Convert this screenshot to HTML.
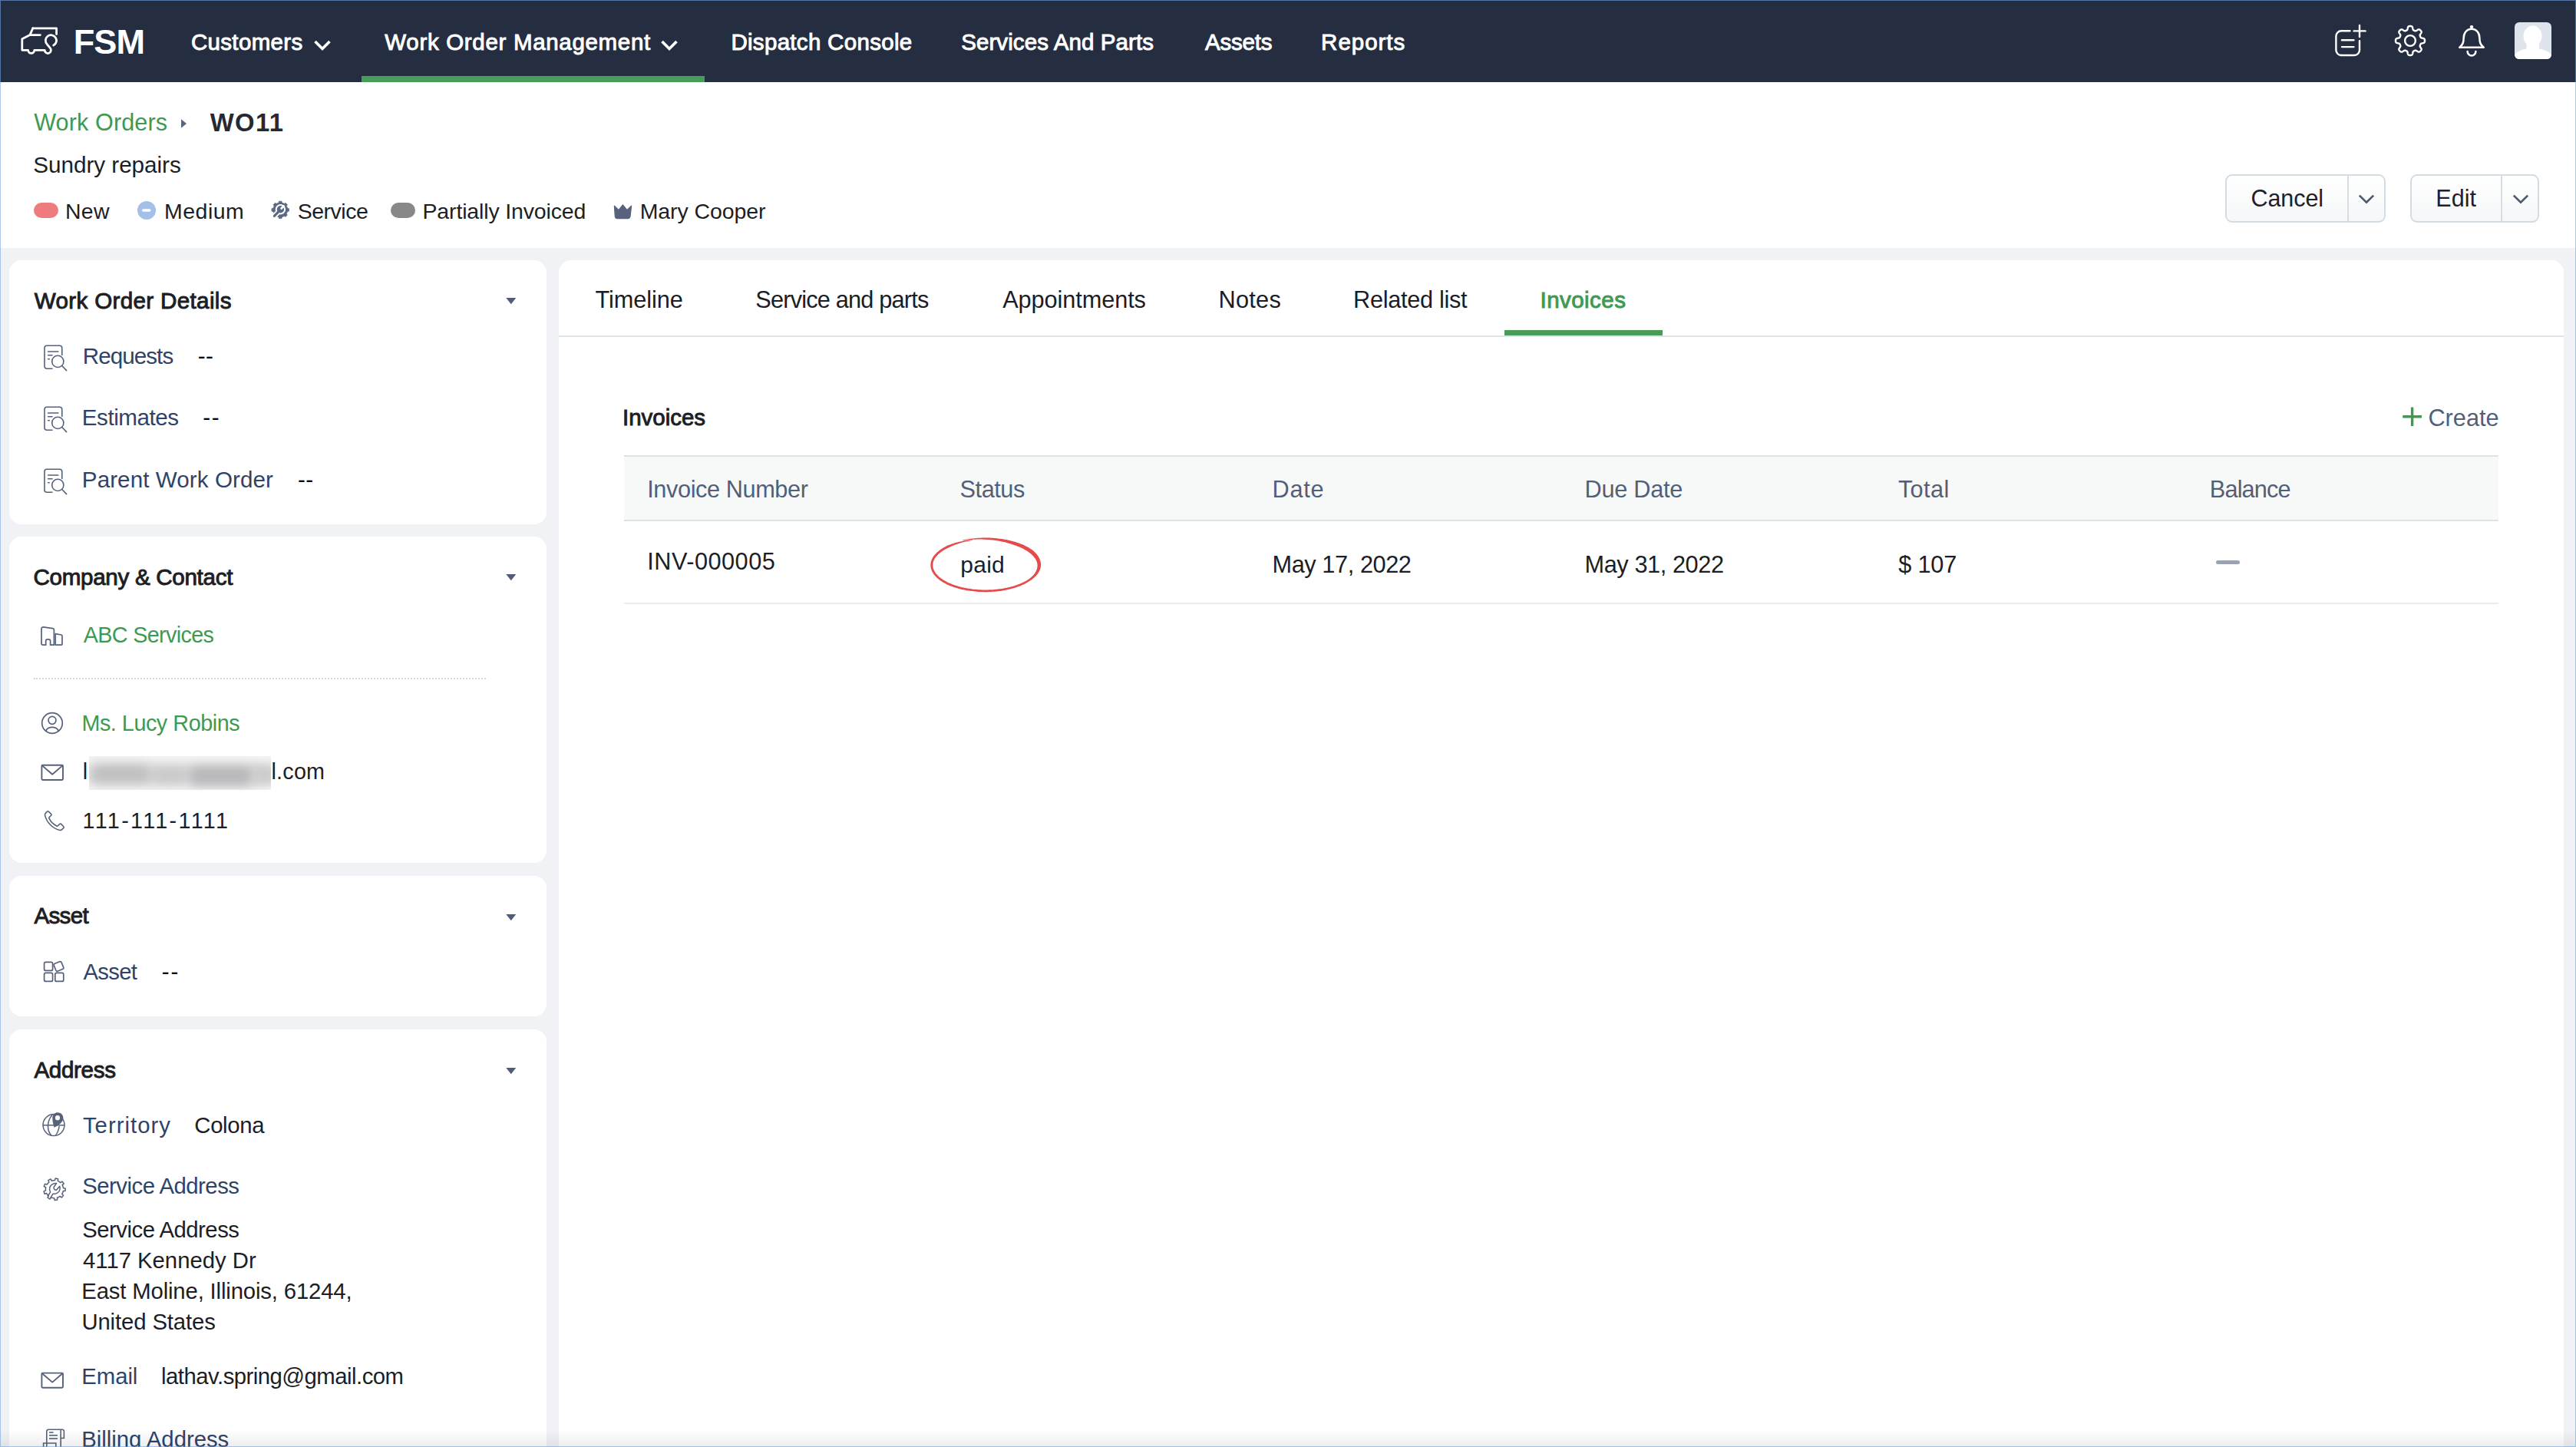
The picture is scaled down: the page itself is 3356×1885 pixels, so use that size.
<!DOCTYPE html>
<html><head><meta charset="utf-8"><title>WO11 - FSM</title>
<style>
html,body{margin:0;padding:0;}
body{width:3356px;height:1885px;overflow:hidden;position:relative;background:#f0f2f6;font-family:"Liberation Sans",sans-serif;}
.b{position:absolute;display:block;}
.t{position:absolute;white-space:pre;font-family:"Liberation Sans",sans-serif;}
.card{background:#fff;border-radius:16px;}
.btn{box-sizing:border-box;border:2px solid #d3dce2;border-radius:9px;background:linear-gradient(#ffffff,#f5f7f8);}
</style></head><body>
<div class="b" style="left:0;top:0;width:3356px;height:107px;background:#252d41"></div>
<div class="b" style="left:0;top:107px;width:3356px;height:216px;background:#fff"></div>
<div class="b" style="left:471px;top:99px;width:447px;height:8px;background:#479c57"></div>
<div class="b card" style="left:12px;top:339px;width:700px;height:344px"></div>
<div class="b card" style="left:12px;top:699px;width:700px;height:425px"></div>
<div class="b card" style="left:12px;top:1141px;width:700px;height:183px"></div>
<div class="b card" style="left:12px;top:1341px;width:700px;height:619px"></div>
<div class="b card" style="left:728px;top:339px;width:2612px;height:1620px"></div>
<div class="b" style="left:728px;top:437px;width:2612px;height:2px;background:#dde4e8"></div>
<div class="b" style="left:1960px;top:430px;width:206px;height:7px;background:#479c57"></div>
<div class="b" style="left:813px;top:593px;width:2442px;height:86px;background:#f7f9f9;border-top:2px solid #dde3e7;border-bottom:2px solid #dde3e7;box-sizing:border-box"></div>
<div class="b" style="left:813px;top:785px;width:2442px;height:2px;background:#e9edf0"></div>
<div class="b" style="left:2887px;top:730px;width:31px;height:5px;border-radius:3px;background:#9ba2b1"></div>
<div class="b btn" style="left:2899px;top:227px;width:209px;height:63px"></div>
<div class="b" style="left:3058px;top:229px;width:2px;height:59px;background:#d6dee3"></div>
<div class="b btn" style="left:3140px;top:227px;width:168px;height:63px"></div>
<div class="b" style="left:3258px;top:229px;width:2px;height:59px;background:#d6dee3"></div>
<div class="t" style="left:95.77px;top:29.40px;font-size:45.08px;line-height:51px;letter-spacing:-0.979px;font-weight:bold;color:#ffffff;">FSM</div>
<div class="t" style="left:248.90px;top:37.50px;font-size:29.48px;line-height:33px;letter-spacing:0.355px;font-weight:normal;color:#ffffff;-webkit-text-stroke:0.94px #ffffff;">Customers</div>
<div class="t" style="left:501.32px;top:37.50px;font-size:29.48px;line-height:33px;letter-spacing:0.697px;font-weight:normal;color:#ffffff;-webkit-text-stroke:0.94px #ffffff;">Work Order Management</div>
<div class="t" style="left:952.41px;top:37.50px;font-size:29.48px;line-height:33px;letter-spacing:0.319px;font-weight:normal;color:#ffffff;-webkit-text-stroke:0.94px #ffffff;">Dispatch Console</div>
<div class="t" style="left:1252.15px;top:37.50px;font-size:29.48px;line-height:33px;letter-spacing:0.108px;font-weight:normal;color:#ffffff;-webkit-text-stroke:0.94px #ffffff;">Services And Parts</div>
<div class="t" style="left:1570.07px;top:37.50px;font-size:29.48px;line-height:33px;letter-spacing:-0.188px;font-weight:normal;color:#ffffff;-webkit-text-stroke:0.94px #ffffff;">Assets</div>
<div class="t" style="left:1721.11px;top:37.50px;font-size:29.48px;line-height:33px;letter-spacing:0.996px;font-weight:normal;color:#ffffff;-webkit-text-stroke:0.94px #ffffff;">Reports</div>
<div class="t" style="left:44.15px;top:142.00px;font-size:30.57px;line-height:34px;letter-spacing:0.123px;font-weight:normal;color:#3e9a50;">Work Orders</div>
<div class="t" style="left:273.70px;top:140.50px;font-size:32.80px;line-height:37px;letter-spacing:1.380px;font-weight:bold;color:#262932;">WO11</div>
<div class="t" style="left:43.26px;top:197.80px;font-size:29.73px;line-height:33px;letter-spacing:-0.054px;font-weight:normal;color:#1c1e25;">Sundry repairs</div>
<div class="t" style="left:85.02px;top:259.00px;font-size:28.47px;line-height:32px;letter-spacing:0.296px;font-weight:normal;color:#1c1e25;">New</div>
<div class="t" style="left:214.12px;top:259.00px;font-size:28.47px;line-height:32px;letter-spacing:0.474px;font-weight:normal;color:#1c1e25;">Medium</div>
<div class="t" style="left:387.72px;top:259.00px;font-size:28.47px;line-height:32px;letter-spacing:-0.482px;font-weight:normal;color:#1c1e25;">Service</div>
<div class="t" style="left:550.52px;top:259.00px;font-size:28.47px;line-height:32px;letter-spacing:-0.142px;font-weight:normal;color:#1c1e25;">Partially Invoiced</div>
<div class="t" style="left:833.72px;top:259.00px;font-size:28.47px;line-height:32px;letter-spacing:-0.072px;font-weight:normal;color:#1c1e25;">Mary Cooper</div>
<div class="t" style="left:2932.47px;top:241.00px;font-size:30.50px;line-height:34px;letter-spacing:-0.069px;font-weight:normal;color:#1f2127;">Cancel</div>
<div class="t" style="left:3173.26px;top:241.00px;font-size:30.50px;line-height:34px;letter-spacing:0.078px;font-weight:normal;color:#1f2127;">Edit</div>
<div class="t" style="left:44.83px;top:374.90px;font-size:29.61px;line-height:33px;letter-spacing:0.323px;font-weight:normal;color:#1c1e25;-webkit-text-stroke:0.95px #1c1e25;">Work Order Details</div>
<div class="t" style="left:107.73px;top:446.90px;font-size:29.59px;line-height:33px;letter-spacing:-0.930px;font-weight:normal;color:#2f4369;">Requests</div>
<div class="t" style="left:257.67px;top:446.90px;font-size:29.59px;line-height:33px;letter-spacing:0.539px;font-weight:normal;color:#000;">--</div>
<div class="t" style="left:106.83px;top:527.20px;font-size:29.59px;line-height:33px;letter-spacing:-0.449px;font-weight:normal;color:#2f4369;">Estimates</div>
<div class="t" style="left:264.37px;top:527.20px;font-size:29.59px;line-height:33px;letter-spacing:1.539px;font-weight:normal;color:#000;">--</div>
<div class="t" style="left:106.83px;top:607.60px;font-size:29.59px;line-height:33px;letter-spacing:0.085px;font-weight:normal;color:#2f4369;">Parent Work Order</div>
<div class="t" style="left:387.97px;top:607.60px;font-size:29.59px;line-height:33px;letter-spacing:0.539px;font-weight:normal;color:#000;">--</div>
<div class="t" style="left:43.49px;top:735.00px;font-size:29.61px;line-height:33px;letter-spacing:-0.318px;font-weight:normal;color:#1c1e25;-webkit-text-stroke:0.95px #1c1e25;">Company &amp; Contact</div>
<div class="t" style="left:108.70px;top:811.30px;font-size:28.75px;line-height:32px;letter-spacing:-0.644px;font-weight:normal;color:#3e9a50;">ABC Services</div>
<div class="t" style="left:106.40px;top:925.80px;font-size:28.75px;line-height:32px;letter-spacing:-0.454px;font-weight:normal;color:#3e9a50;">Ms. Lucy Robins</div>
<div class="t" style="left:107.83px;top:989.40px;font-size:28.75px;line-height:32px;letter-spacing:0.000px;font-weight:normal;color:#1c1e25;">l</div>
<div class="t" style="left:353.53px;top:989.40px;font-size:28.75px;line-height:32px;letter-spacing:0.206px;font-weight:normal;color:#1c1e25;">l.com</div>
<div class="t" style="left:107.54px;top:1053.00px;font-size:28.75px;line-height:32px;letter-spacing:2.302px;font-weight:normal;color:#1c1e25;">111-111-1111</div>
<div class="t" style="left:44.47px;top:1176.00px;font-size:29.61px;line-height:33px;letter-spacing:-0.707px;font-weight:normal;color:#1c1e25;-webkit-text-stroke:0.95px #1c1e25;">Asset</div>
<div class="t" style="left:108.50px;top:1249.00px;font-size:29.31px;line-height:33px;letter-spacing:-0.707px;font-weight:normal;color:#2f4369;">Asset</div>
<div class="t" style="left:210.68px;top:1249.00px;font-size:29.31px;line-height:33px;letter-spacing:2.001px;font-weight:normal;color:#000;">--</div>
<div class="t" style="left:44.47px;top:1376.70px;font-size:29.61px;line-height:33px;letter-spacing:-0.347px;font-weight:normal;color:#1c1e25;-webkit-text-stroke:0.95px #1c1e25;">Address</div>
<div class="t" style="left:107.91px;top:1448.70px;font-size:29.31px;line-height:33px;letter-spacing:1.035px;font-weight:normal;color:#2f4369;">Territory</div>
<div class="t" style="left:253.33px;top:1448.70px;font-size:29.31px;line-height:33px;letter-spacing:-0.349px;font-weight:normal;color:#1c1e25;">Colona</div>
<div class="t" style="left:107.28px;top:1528.20px;font-size:29.31px;line-height:33px;letter-spacing:-0.501px;font-weight:normal;color:#2f4369;">Service Address</div>
<div class="t" style="left:107.28px;top:1584.50px;font-size:29.31px;line-height:33px;letter-spacing:-0.501px;font-weight:normal;color:#1c1e25;">Service Address</div>
<div class="t" style="left:108.01px;top:1624.70px;font-size:29.31px;line-height:33px;letter-spacing:-0.014px;font-weight:normal;color:#1c1e25;">4117 Kennedy Dr</div>
<div class="t" style="left:106.26px;top:1664.90px;font-size:29.31px;line-height:33px;letter-spacing:-0.152px;font-weight:normal;color:#1c1e25;">East Moline, Illinois, 61244,</div>
<div class="t" style="left:106.40px;top:1704.50px;font-size:29.31px;line-height:33px;letter-spacing:-0.115px;font-weight:normal;color:#1c1e25;">United States</div>
<div class="t" style="left:106.26px;top:1776.00px;font-size:29.31px;line-height:33px;letter-spacing:-0.031px;font-weight:normal;color:#2f4369;">Email</div>
<div class="t" style="left:210.09px;top:1776.00px;font-size:29.31px;line-height:33px;letter-spacing:-0.512px;font-weight:normal;color:#1c1e25;">lathav.spring@gmail.com</div>
<div class="t" style="left:106.26px;top:1857.50px;font-size:29.31px;line-height:33px;letter-spacing:-0.014px;font-weight:normal;color:#2f4369;">Billing Address</div>
<div class="t" style="left:775.39px;top:373.40px;font-size:30.70px;line-height:35px;letter-spacing:-0.049px;font-weight:normal;color:#1b1d24;">Timeline</div>
<div class="t" style="left:984.32px;top:373.40px;font-size:30.70px;line-height:35px;letter-spacing:-0.802px;font-weight:normal;color:#1b1d24;">Service and parts</div>
<div class="t" style="left:1306.20px;top:373.40px;font-size:30.70px;line-height:35px;letter-spacing:-0.080px;font-weight:normal;color:#1b1d24;">Appointments</div>
<div class="t" style="left:1587.54px;top:373.40px;font-size:30.70px;line-height:35px;letter-spacing:0.273px;font-weight:normal;color:#1b1d24;">Notes</div>
<div class="t" style="left:1763.04px;top:373.40px;font-size:30.70px;line-height:35px;letter-spacing:-0.293px;font-weight:normal;color:#1b1d24;">Related list</div>
<div class="t" style="left:2006.52px;top:373.80px;font-size:29.48px;line-height:33px;letter-spacing:0.466px;font-weight:normal;color:#3e9a50;-webkit-text-stroke:0.94px #3e9a50;">Invoices</div>
<div class="t" style="left:811.02px;top:526.70px;font-size:29.48px;line-height:33px;letter-spacing:-0.005px;font-weight:normal;color:#1c1e25;-webkit-text-stroke:0.94px #1c1e25;">Invoices</div>
<div class="t" style="left:3163.46px;top:527.00px;font-size:30.70px;line-height:35px;letter-spacing:0.001px;font-weight:normal;color:#525f79;">Create</div>
<div class="t" style="left:843.24px;top:620.20px;font-size:30.70px;line-height:35px;letter-spacing:-0.401px;font-weight:normal;color:#525f79;">Invoice Number</div>
<div class="t" style="left:1250.62px;top:620.20px;font-size:30.70px;line-height:35px;letter-spacing:-0.458px;font-weight:normal;color:#525f79;">Status</div>
<div class="t" style="left:1657.54px;top:620.20px;font-size:30.70px;line-height:35px;letter-spacing:0.750px;font-weight:normal;color:#525f79;">Date</div>
<div class="t" style="left:2064.54px;top:620.20px;font-size:30.70px;line-height:35px;letter-spacing:-0.270px;font-weight:normal;color:#525f79;">Due Date</div>
<div class="t" style="left:2472.89px;top:620.20px;font-size:30.70px;line-height:35px;letter-spacing:0.406px;font-weight:normal;color:#525f79;">Total</div>
<div class="t" style="left:2878.84px;top:620.20px;font-size:30.70px;line-height:35px;letter-spacing:-0.860px;font-weight:normal;color:#525f79;">Balance</div>
<div class="t" style="left:843.24px;top:714.10px;font-size:30.70px;line-height:35px;letter-spacing:0.497px;font-weight:normal;color:#1c1e25;">INV-000005</div>
<div class="t" style="left:1251.25px;top:718.70px;font-size:30.01px;line-height:33px;letter-spacing:0.263px;font-weight:normal;color:#1c1e25;">paid</div>
<div class="t" style="left:1657.54px;top:717.70px;font-size:30.70px;line-height:35px;letter-spacing:-0.416px;font-weight:normal;color:#1c1e25;">May 17, 2022</div>
<div class="t" style="left:2064.54px;top:717.70px;font-size:30.70px;line-height:35px;letter-spacing:-0.407px;font-weight:normal;color:#1c1e25;">May 31, 2022</div>
<div class="t" style="left:2473.19px;top:717.70px;font-size:30.70px;line-height:35px;letter-spacing:-0.180px;font-weight:normal;color:#1c1e25;">$ 107</div>
<svg class="b" style="left:20px;top:28px;" width="62" height="50" viewBox="20 28 62 50"><g fill="none" stroke="#fff" stroke-width="2.8" stroke-linejoin="round" stroke-linecap="round"><path d="M42.8 36.8 H73.6 V44.5"/><path d="M42.8 36.8 L39 45.6 H52.4"/><path d="M39 45.6 L28.8 50.8 V65.3 H36.6 A4.1 4.1 0 0 0 44.8 65.3 H58.2 A4.1 4.1 0 1 0 65.4 62.7 L61.4 57.8 A7.1 7.1 0 1 1 69.7 59.1"/></g></svg>
<svg class="b" style="left:405.9px;top:44px;" width="28" height="28" viewBox="405.9 44 28 28"><path d="M410.4 54 L419.9 63.5 L429.4 54" fill="none" stroke="#fff" stroke-width="3.6"/></svg>
<svg class="b" style="left:858.2px;top:44px;" width="28" height="28" viewBox="858.2 44 28 28"><path d="M862.7 54 L872.2 63.5 L881.7 54" fill="none" stroke="#fff" stroke-width="3.6"/></svg>
<svg class="b" style="left:3036px;top:26px;" width="52" height="52" viewBox="3036 26 52 52"><g fill="none" stroke="#fff" stroke-width="2.4" stroke-linecap="round"><path d="M3061.5 40.3 H3050.2 A6.8 6.8 0 0 0 3043.4 47.1 V65.2 A6.8 6.8 0 0 0 3050.2 72 H3067.2 A6.8 6.8 0 0 0 3074 65.2 V53.2"/><path d="M3051 52.2 H3066.4"/><path d="M3051 61.1 H3066.4"/><path d="M3074 32.9 V48"/><path d="M3066.6 40.4 H3081.6"/></g></svg>
<svg class="b" style="left:3114px;top:27px;" width="52" height="52" viewBox="3114 27 52 52"><path d="M3159.00 53.00 L3159.00 53.25 L3158.99 53.50 L3158.97 53.75 L3158.94 53.99 L3158.90 54.24 L3158.84 54.48 L3158.77 54.72 L3158.67 54.96 L3158.53 55.19 L3158.34 55.41 L3158.08 55.62 L3157.75 55.81 L3157.33 55.98 L3156.83 56.12 L3156.28 56.24 L3155.74 56.34 L3155.24 56.45 L3154.81 56.56 L3154.47 56.67 L3154.20 56.81 L3154.00 56.95 L3153.84 57.10 L3153.71 57.26 L3153.60 57.42 L3153.50 57.58 L3153.42 57.75 L3153.34 57.92 L3153.26 58.09 L3153.19 58.26 L3153.12 58.43 L3153.05 58.61 L3152.98 58.78 L3152.91 58.95 L3152.85 59.13 L3152.79 59.31 L3152.74 59.49 L3152.70 59.68 L3152.68 59.89 L3152.69 60.11 L3152.73 60.35 L3152.83 60.63 L3152.99 60.96 L3153.21 61.34 L3153.49 61.76 L3153.80 62.22 L3154.10 62.69 L3154.36 63.15 L3154.54 63.56 L3154.64 63.93 L3154.67 64.26 L3154.65 64.55 L3154.59 64.81 L3154.49 65.05 L3154.37 65.28 L3154.24 65.49 L3154.09 65.69 L3153.94 65.88 L3153.78 66.07 L3153.61 66.26 L3153.44 66.44 L3153.26 66.61 L3153.07 66.78 L3152.88 66.94 L3152.69 67.09 L3152.49 67.24 L3152.28 67.37 L3152.05 67.49 L3151.81 67.59 L3151.55 67.65 L3151.26 67.67 L3150.93 67.64 L3150.56 67.54 L3150.15 67.36 L3149.69 67.10 L3149.22 66.80 L3148.76 66.49 L3148.34 66.21 L3147.96 65.99 L3147.63 65.83 L3147.35 65.73 L3147.11 65.69 L3146.89 65.68 L3146.68 65.70 L3146.49 65.74 L3146.31 65.79 L3146.13 65.85 L3145.95 65.91 L3145.78 65.98 L3145.61 66.05 L3145.43 66.12 L3145.26 66.19 L3145.09 66.26 L3144.92 66.34 L3144.75 66.42 L3144.58 66.50 L3144.42 66.60 L3144.26 66.71 L3144.10 66.84 L3143.95 67.00 L3143.81 67.20 L3143.67 67.47 L3143.56 67.81 L3143.45 68.24 L3143.34 68.74 L3143.24 69.28 L3143.12 69.83 L3142.98 70.33 L3142.81 70.75 L3142.62 71.08 L3142.41 71.34 L3142.19 71.53 L3141.96 71.67 L3141.72 71.77 L3141.48 71.84 L3141.24 71.90 L3140.99 71.94 L3140.75 71.97 L3140.50 71.99 L3140.25 72.00 L3140.00 72.00 L3139.75 72.00 L3139.50 71.99 L3139.25 71.97 L3139.01 71.94 L3138.76 71.90 L3138.52 71.84 L3138.28 71.77 L3138.04 71.67 L3137.81 71.53 L3137.59 71.34 L3137.38 71.08 L3137.19 70.75 L3137.02 70.33 L3136.88 69.83 L3136.76 69.28 L3136.66 68.74 L3136.55 68.24 L3136.44 67.81 L3136.33 67.47 L3136.19 67.20 L3136.05 67.00 L3135.90 66.84 L3135.74 66.71 L3135.58 66.60 L3135.42 66.50 L3135.25 66.42 L3135.08 66.34 L3134.91 66.26 L3134.74 66.19 L3134.57 66.12 L3134.39 66.05 L3134.22 65.98 L3134.05 65.91 L3133.87 65.85 L3133.69 65.79 L3133.51 65.74 L3133.32 65.70 L3133.11 65.68 L3132.89 65.69 L3132.65 65.73 L3132.37 65.83 L3132.04 65.99 L3131.66 66.21 L3131.24 66.49 L3130.78 66.80 L3130.31 67.10 L3129.85 67.36 L3129.44 67.54 L3129.07 67.64 L3128.74 67.67 L3128.45 67.65 L3128.19 67.59 L3127.95 67.49 L3127.72 67.37 L3127.51 67.24 L3127.31 67.09 L3127.12 66.94 L3126.93 66.78 L3126.74 66.61 L3126.56 66.44 L3126.39 66.26 L3126.22 66.07 L3126.06 65.88 L3125.91 65.69 L3125.76 65.49 L3125.63 65.28 L3125.51 65.05 L3125.41 64.81 L3125.35 64.55 L3125.33 64.26 L3125.36 63.93 L3125.46 63.56 L3125.64 63.15 L3125.90 62.69 L3126.20 62.22 L3126.51 61.76 L3126.79 61.34 L3127.01 60.96 L3127.17 60.63 L3127.27 60.35 L3127.31 60.11 L3127.32 59.89 L3127.30 59.68 L3127.26 59.49 L3127.21 59.31 L3127.15 59.13 L3127.09 58.95 L3127.02 58.78 L3126.95 58.61 L3126.88 58.43 L3126.81 58.26 L3126.74 58.09 L3126.66 57.92 L3126.58 57.75 L3126.50 57.58 L3126.40 57.42 L3126.29 57.26 L3126.16 57.10 L3126.00 56.95 L3125.80 56.81 L3125.53 56.67 L3125.19 56.56 L3124.76 56.45 L3124.26 56.34 L3123.72 56.24 L3123.17 56.12 L3122.67 55.98 L3122.25 55.81 L3121.92 55.62 L3121.66 55.41 L3121.47 55.19 L3121.33 54.96 L3121.23 54.72 L3121.16 54.48 L3121.10 54.24 L3121.06 53.99 L3121.03 53.75 L3121.01 53.50 L3121.00 53.25 L3121.00 53.00 L3121.00 52.75 L3121.01 52.50 L3121.03 52.25 L3121.06 52.01 L3121.10 51.76 L3121.16 51.52 L3121.23 51.28 L3121.33 51.04 L3121.47 50.81 L3121.66 50.59 L3121.92 50.38 L3122.25 50.19 L3122.67 50.02 L3123.17 49.88 L3123.72 49.76 L3124.26 49.66 L3124.76 49.55 L3125.19 49.44 L3125.53 49.33 L3125.80 49.19 L3126.00 49.05 L3126.16 48.90 L3126.29 48.74 L3126.40 48.58 L3126.50 48.42 L3126.58 48.25 L3126.66 48.08 L3126.74 47.91 L3126.81 47.74 L3126.88 47.57 L3126.95 47.39 L3127.02 47.22 L3127.09 47.05 L3127.15 46.87 L3127.21 46.69 L3127.26 46.51 L3127.30 46.32 L3127.32 46.11 L3127.31 45.89 L3127.27 45.65 L3127.17 45.37 L3127.01 45.04 L3126.79 44.66 L3126.51 44.24 L3126.20 43.78 L3125.90 43.31 L3125.64 42.85 L3125.46 42.44 L3125.36 42.07 L3125.33 41.74 L3125.35 41.45 L3125.41 41.19 L3125.51 40.95 L3125.63 40.72 L3125.76 40.51 L3125.91 40.31 L3126.06 40.12 L3126.22 39.93 L3126.39 39.74 L3126.56 39.56 L3126.74 39.39 L3126.93 39.22 L3127.12 39.06 L3127.31 38.91 L3127.51 38.76 L3127.72 38.63 L3127.95 38.51 L3128.19 38.41 L3128.45 38.35 L3128.74 38.33 L3129.07 38.36 L3129.44 38.46 L3129.85 38.64 L3130.31 38.90 L3130.78 39.20 L3131.24 39.51 L3131.66 39.79 L3132.04 40.01 L3132.37 40.17 L3132.65 40.27 L3132.89 40.31 L3133.11 40.32 L3133.32 40.30 L3133.51 40.26 L3133.69 40.21 L3133.87 40.15 L3134.05 40.09 L3134.22 40.02 L3134.39 39.95 L3134.57 39.88 L3134.74 39.81 L3134.91 39.74 L3135.08 39.66 L3135.25 39.58 L3135.42 39.50 L3135.58 39.40 L3135.74 39.29 L3135.90 39.16 L3136.05 39.00 L3136.19 38.80 L3136.33 38.53 L3136.44 38.19 L3136.55 37.76 L3136.66 37.26 L3136.76 36.72 L3136.88 36.17 L3137.02 35.67 L3137.19 35.25 L3137.38 34.92 L3137.59 34.66 L3137.81 34.47 L3138.04 34.33 L3138.28 34.23 L3138.52 34.16 L3138.76 34.10 L3139.01 34.06 L3139.25 34.03 L3139.50 34.01 L3139.75 34.00 L3140.00 34.00 L3140.25 34.00 L3140.50 34.01 L3140.75 34.03 L3140.99 34.06 L3141.24 34.10 L3141.48 34.16 L3141.72 34.23 L3141.96 34.33 L3142.19 34.47 L3142.41 34.66 L3142.62 34.92 L3142.81 35.25 L3142.98 35.67 L3143.12 36.17 L3143.24 36.72 L3143.34 37.26 L3143.45 37.76 L3143.56 38.19 L3143.67 38.53 L3143.81 38.80 L3143.95 39.00 L3144.10 39.16 L3144.26 39.29 L3144.42 39.40 L3144.58 39.50 L3144.75 39.58 L3144.92 39.66 L3145.09 39.74 L3145.26 39.81 L3145.43 39.88 L3145.61 39.95 L3145.78 40.02 L3145.95 40.09 L3146.13 40.15 L3146.31 40.21 L3146.49 40.26 L3146.68 40.30 L3146.89 40.32 L3147.11 40.31 L3147.35 40.27 L3147.63 40.17 L3147.96 40.01 L3148.34 39.79 L3148.76 39.51 L3149.22 39.20 L3149.69 38.90 L3150.15 38.64 L3150.56 38.46 L3150.93 38.36 L3151.26 38.33 L3151.55 38.35 L3151.81 38.41 L3152.05 38.51 L3152.28 38.63 L3152.49 38.76 L3152.69 38.91 L3152.88 39.06 L3153.07 39.22 L3153.26 39.39 L3153.44 39.56 L3153.61 39.74 L3153.78 39.93 L3153.94 40.12 L3154.09 40.31 L3154.24 40.51 L3154.37 40.72 L3154.49 40.95 L3154.59 41.19 L3154.65 41.45 L3154.67 41.74 L3154.64 42.07 L3154.54 42.44 L3154.36 42.85 L3154.10 43.31 L3153.80 43.78 L3153.49 44.24 L3153.21 44.66 L3152.99 45.04 L3152.83 45.37 L3152.73 45.65 L3152.69 45.89 L3152.68 46.11 L3152.70 46.32 L3152.74 46.51 L3152.79 46.69 L3152.85 46.87 L3152.91 47.05 L3152.98 47.22 L3153.05 47.39 L3153.12 47.57 L3153.19 47.74 L3153.26 47.91 L3153.34 48.08 L3153.42 48.25 L3153.50 48.42 L3153.60 48.58 L3153.71 48.74 L3153.84 48.90 L3154.00 49.05 L3154.20 49.19 L3154.47 49.33 L3154.81 49.44 L3155.24 49.55 L3155.74 49.66 L3156.28 49.76 L3156.83 49.88 L3157.33 50.02 L3157.75 50.19 L3158.08 50.38 L3158.34 50.59 L3158.53 50.81 L3158.67 51.04 L3158.77 51.28 L3158.84 51.52 L3158.90 51.76 L3158.94 52.01 L3158.97 52.25 L3158.99 52.50 L3159.00 52.75Z" fill="none" stroke="#fff" stroke-width="2.4" stroke-linejoin="round"/><circle cx="3140" cy="53" r="6.9" fill="none" stroke="#fff" stroke-width="2.4"/></svg>
<svg class="b" style="left:3196px;top:26px;" width="48" height="54" viewBox="3196 26 48 54"><g fill="none" stroke="#fff" stroke-width="2.5" stroke-linejoin="round" stroke-linecap="round"><path d="M3220 37.8 C3213.5 37.8 3209.6 43 3209.6 50 C3209.6 55 3209 57.5 3206 60 L3204.2 61.8 H3235.8 L3234 60 C3231 57.5 3230.4 55 3230.4 50 C3230.4 43 3226.5 37.8 3220 37.8 Z"/><path d="M3214.6 67 A5.4 5.4 0 0 0 3225.4 67"/></g><rect x="3217.9" y="33" width="4.2" height="4" rx="1.6" fill="#fff"/></svg>
<svg class="b" style="left:3275px;top:28px;" width="50" height="50" viewBox="3275 28 50 50"><defs><clipPath id="av"><rect x="3276" y="29" width="48" height="48" rx="6"/></clipPath></defs><rect x="3276" y="29" width="48" height="48" rx="6" fill="#dfe3eb"/><g clip-path="url(#av)" fill="#fff"><ellipse cx="3299.5" cy="47" rx="12" ry="13.6"/><path d="M3291.5 56 V63.5 C3284 65 3278.5 67.5 3276 72 V77 H3324 V72 C3321.5 67.5 3316 65 3308 63.5 V56 Z"/></g></svg>
<svg class="b" style="left:232px;top:150px;" width="16" height="22" viewBox="232 150 16 22"><path d="M236 155.2 L243 161 L236 166.8 Z" fill="#5b6680"/></svg>
<div class="b" style="left:44.3px;top:264px;width:31.4px;height:20px;border-radius:10px;background:#ef7c7c"></div>
<svg class="b" style="left:176px;top:258px;" width="31" height="31" viewBox="176 258 31 31"><circle cx="191" cy="274" r="12" fill="#a4c0e9"/><rect x="185" y="272.3" width="11.5" height="3.4" rx="1.7" fill="#fff"/></svg>
<svg class="b" style="left:350px;top:258px;" width="31" height="31" viewBox="350 258 31 31"><path d="M361.56 264.62 L363.27 264.10 L363.43 262.24 L366.97 262.24 L367.13 264.10 L368.84 264.62 L370.42 265.46 L371.84 264.26 L374.34 266.76 L373.14 268.18 L373.98 269.76 L374.50 271.47 L376.36 271.63 L376.36 275.17 L374.50 275.33 L373.98 277.04 L373.14 278.62 L374.34 280.04 L371.84 282.54 L370.42 281.34 L368.84 282.18 L367.13 282.70 L366.97 284.56 L363.43 284.56 L363.27 282.70 L361.56 282.18 L359.98 281.34 L358.56 282.54 L356.06 280.04 L357.26 278.62 L356.42 277.04 L355.90 275.33 L354.04 275.17 L354.04 271.63 L355.90 271.47 L356.42 269.76 L357.26 268.18 L356.06 266.76 L358.56 264.26 L359.98 265.46Z" fill="#5a6883" stroke="#5a6883" stroke-width="0.8" stroke-linejoin="round"/><circle cx="365.4" cy="272.7" r="6.7" fill="#fff"/><path d="M357.4 281.4 L363.2 275.4" stroke="#fff" stroke-width="6.6" stroke-linecap="round"/><circle cx="365.4" cy="272.7" r="4.7" fill="#5a6883"/><path d="M357.4 281.4 L363.2 275.4" stroke="#5a6883" stroke-width="3.2" stroke-linecap="round"/><path d="M366.6 271.5 L369.6 268.4" stroke="#fff" stroke-width="2.8" stroke-linecap="round"/></svg>
<div class="b" style="left:509px;top:264px;width:32px;height:20px;border-radius:10px;background:#888"></div>
<svg class="b" style="left:796px;top:262px;" width="31" height="26" viewBox="796 262 31 26"><path d="M800.4 268.2 L806 273.6 L811.4 266.8 L816.8 273.6 L822.6 268.2 L821 282 Q820.6 284.6 818 284.6 H804.2 Q801.6 284.6 801.3 282 Z" fill="#58627c" stroke="#58627c" stroke-width="1.2" stroke-linejoin="round"/></svg>
<svg class="b" style="left:3069.4px;top:246px;" width="28" height="28" viewBox="3069.4 246 28 28"><path d="M3074.2000000000003 254.6 L3083.4 263.6 L3092.6 254.6" fill="none" stroke="#4c5770" stroke-width="2.6"/></svg>
<svg class="b" style="left:3269.5px;top:246px;" width="28" height="28" viewBox="3269.5 246 28 28"><path d="M3274.3 254.6 L3283.5 263.6 L3292.7 254.6" fill="none" stroke="#4c5770" stroke-width="2.6"/></svg>
<svg class="b" style="left:655px;top:384px;" width="22" height="16" viewBox="655 384 22 16"><path d="M659.3 388 H672.3 L665.8 396.2 Z" fill="#515c76"/></svg>
<svg class="b" style="left:655px;top:744.3px;" width="22" height="16" viewBox="655 744.3 22 16"><path d="M659.3 748.3 H672.3 L665.8 756.5 Z" fill="#515c76"/></svg>
<svg class="b" style="left:655px;top:1186.5px;" width="22" height="16" viewBox="655 1186.5 22 16"><path d="M659.3 1190.5 H672.3 L665.8 1198.7 Z" fill="#515c76"/></svg>
<svg class="b" style="left:655px;top:1386.6px;" width="22" height="16" viewBox="655 1386.6 22 16"><path d="M659.3 1390.6 H672.3 L665.8 1398.8 Z" fill="#515c76"/></svg>
<svg class="b" style="left:50px;top:445px;" width="42" height="44" viewBox="50 445 42 44"><g fill="none" stroke="#56617a" stroke-width="1.6" stroke-linecap="round"><path d="M68 480.2 H61 A3 3 0 0 1 58 477.2 V453.2 A3 3 0 0 1 61 450.2 H77.8 A3 3 0 0 1 80.8 453.2 V462.5"/><path d="M62.6 458 H75.8"/><path d="M62.6 462.8 H68"/><path d="M62.6 467.8 H64.2"/><circle cx="75.3" cy="470.9" r="7.6"/><path d="M80.8 476.5 L86.6 482.6"/></g></svg>
<svg class="b" style="left:50px;top:525.4px;" width="42" height="44" viewBox="50 525.4 42 44"><g fill="none" stroke="#56617a" stroke-width="1.6" stroke-linecap="round"><path d="M68 560.6 H61 A3 3 0 0 1 58 557.6 V533.6 A3 3 0 0 1 61 530.6 H77.8 A3 3 0 0 1 80.8 533.6 V542.9"/><path d="M62.6 538.4 H75.8"/><path d="M62.6 543.2 H68"/><path d="M62.6 548.2 H64.2"/><circle cx="75.3" cy="551.3" r="7.6"/><path d="M80.8 556.9 L86.6 563.0"/></g></svg>
<svg class="b" style="left:50px;top:605.8px;" width="42" height="44" viewBox="50 605.8 42 44"><g fill="none" stroke="#56617a" stroke-width="1.6" stroke-linecap="round"><path d="M68 641.0 H61 A3 3 0 0 1 58 638.0 V614.0 A3 3 0 0 1 61 611.0 H77.8 A3 3 0 0 1 80.8 614.0 V623.3"/><path d="M62.6 618.8 H75.8"/><path d="M62.6 623.6 H68"/><path d="M62.6 628.6 H64.2"/><circle cx="75.3" cy="631.7" r="7.6"/><path d="M80.8 637.3 L86.6 643.4000000000001"/></g></svg>
<svg class="b" style="left:50px;top:812px;" width="36" height="34" viewBox="50 812 36 34"><g fill="none" stroke="#56617a" stroke-width="1.7" stroke-linejoin="round"><path d="M59.7 840.2 H55.6 A1.6 1.6 0 0 1 54 838.6 V819 A2.2 2.2 0 0 1 56.4 816.8 L68.8 818.6 A2 2 0 0 1 70.4 820.6 V840.2 H65.6 V835 A2.2 2.2 0 0 0 63.4 832.8 H61.9 A2.2 2.2 0 0 0 59.7 835 Z"/><path d="M72.2 825.6 L79.8 827 A1.6 1.6 0 0 1 81 828.6 V838.4 A1.8 1.8 0 0 1 79.2 840.2 H72.2 Z"/></g></svg>
<div class="b" style="left:44px;top:882.5px;width:589px;height:0;border-top:2px dotted #d3d7dd"></div>
<svg class="b" style="left:50px;top:924px;" width="36" height="36" viewBox="50 924 36 36"><g fill="none" stroke="#56617a" stroke-width="1.7"><circle cx="68" cy="942" r="13.3"/><circle cx="68" cy="938.3" r="5"/><path d="M59.5 952.2 A9.6 9.2 0 0 1 76.5 952.2"/></g></svg>
<svg class="b" style="left:50px;top:992px;" width="36" height="28" viewBox="50 992 36 28"><g fill="none" stroke="#56617a" stroke-width="1.9" stroke-linejoin="round"><rect x="54.4" y="996.8" width="27.6" height="19.2" rx="1.2"/><path d="M55.0 997.4 L68.2 1008.8 L81.4 997.4"/></g></svg>
<svg class="b" style="left:50px;top:1784px;" width="36" height="28" viewBox="50 1784 36 28"><g fill="none" stroke="#56617a" stroke-width="1.9" stroke-linejoin="round"><rect x="54.4" y="1788.6" width="27.6" height="19.2" rx="1.2"/><path d="M55.0 1789.1999999999998 L68.2 1800.6 L81.4 1789.1999999999998"/></g></svg>
<svg class="b" style="left:52px;top:1052px;" width="36" height="34" viewBox="52 1052 36 34"><path d="M63.2 1057.2 L66.6 1060.4 A1.2 1.2 0 0 1 66.6 1062.2 L64.2 1064.6 A1.2 1.2 0 0 0 64 1066.2 C66 1070.4 69.6 1074 73.8 1076 A1.2 1.2 0 0 0 75.4 1075.8 L77.8 1073.4 A1.2 1.2 0 0 1 79.6 1073.4 L82.8 1076.8 A1.2 1.2 0 0 1 82.8 1078.6 L80.6 1080.6 A3 3 0 0 1 77.6 1081.4 C68.4 1079 61 1071.6 58.6 1062.4 A3 3 0 0 1 59.4 1059.4 L61.4 1057.2 A1.2 1.2 0 0 1 63.2 1057.2 Z" fill="none" stroke="#56617a" stroke-width="1.6" stroke-linejoin="round"/></svg>
<svg class="b" style="left:52px;top:1246px;" width="36" height="36" viewBox="52 1246 36 36"><g fill="none" stroke="#56617a" stroke-width="1.7"><rect x="57.6" y="1253.4" width="11" height="11" rx="2"/><rect x="57.6" y="1267.4" width="11" height="11" rx="2"/><rect x="71.8" y="1267.4" width="11" height="11" rx="2"/><rect x="71.2" y="1253.6" width="10.6" height="10.6" rx="2" transform="rotate(-22 76.5 1258.9)"/></g></svg>
<svg class="b" style="left:50px;top:1444px;" width="40" height="40" viewBox="50 1444 40 40"><g fill="none" stroke="#56617a" stroke-width="1.5"><circle cx="70" cy="1465.6" r="14"/><path d="M56 1465.8 H84"/><path d="M68.5 1452 C61 1460 60.5 1472 67.2 1479.6"/><path d="M77.2 1467 C76.5 1472.5 74.5 1476.5 72 1479.6"/></g><path d="M75 1449.2 C79.4 1449.2 82.4 1452.4 82.4 1456.4 C82.4 1461.8 76 1466 70.6 1468.8 C69 1463.5 68 1459 68.4 1455.2 C69 1451.6 71.6 1449.2 75 1449.2 Z" fill="#56617a"/><circle cx="75" cy="1456.2" r="3.1" fill="#fff"/></svg>
<svg class="b" style="left:50px;top:1528px;" width="42" height="42" viewBox="50 1528 42 42"><path d="M69.39 1537.71 L71.49 1537.61 L72.19 1535.05 L75.67 1535.79 L75.27 1538.41 L77.15 1539.36 L78.82 1540.63 L81.01 1539.12 L83.20 1541.93 L81.20 1543.68 L82.03 1545.62 L82.50 1547.67 L85.14 1547.91 L85.02 1551.47 L82.36 1551.53 L81.76 1553.55 L80.79 1555.42 L82.66 1557.30 L80.28 1559.95 L78.21 1558.29 L76.45 1559.44 L74.51 1560.26 L74.72 1562.90 L71.20 1563.40 L70.68 1560.80 L68.59 1560.55 L66.58 1559.92 L65.04 1562.09 L62.03 1560.20 L63.30 1557.87 L61.86 1556.34 L60.72 1554.57 L58.15 1555.25 L57.05 1551.86 L59.52 1550.89 L59.41 1548.80 L59.67 1546.71 L57.27 1545.57 L58.60 1542.27 L61.12 1543.12 L62.38 1541.44 L63.92 1540.01 L62.81 1537.60 L65.96 1535.93 L67.34 1538.19Z" fill="none" stroke="#56617a" stroke-width="1.5" stroke-linejoin="round"/><path d="M62 1558.5 L65.6 1553.2 C64 1549.5 64.6 1545.5 67.6 1543.2 C69.6 1541.5 72 1541.2 73.6 1541.6 L70.2 1546.3 C69.6 1548.5 71.2 1550.6 73.5 1550.3 L77.8 1545.2 C78.6 1548.5 78 1551.5 75.5 1553.5 C73.5 1555.2 71 1555.6 69 1555.2 L65.8 1560.5" fill="none" stroke="#56617a" stroke-width="1.5" stroke-linejoin="round"/></svg>
<svg class="b" style="left:52px;top:1856px;" width="36" height="30" viewBox="52 1856 36 30"><g fill="none" stroke="#56617a" stroke-width="1.6"><path d="M60.8 1885 V1864.8 A2.6 2.6 0 0 1 63.4 1862.2 H81.2 A2.2 2.2 0 0 1 83.4 1864.4 V1873.5 H79.2 V1885"/><path d="M79.2 1862.2 V1873.5"/><path d="M64 1866 H69.6"/><path d="M64 1869.8 H75"/><path d="M64 1874 H75"/><path d="M56.6 1885 V1880 H72.8 V1885"/></g></svg>
<svg class="b" style="left:3126px;top:526px;" width="34" height="34" viewBox="3126 526 34 34"><path d="M3142.6 530.4 V555 M3130.2 542.7 H3155" stroke="#3e9a50" stroke-width="3.4"/></svg>
<svg class="b" style="left:1200px;top:690px;" width="170" height="95" viewBox="1200 690 170 95"><path d="M1266.81 703.20 L1264.62 703.41 L1262.44 703.66 L1260.27 703.94 L1258.13 704.25 L1256.02 704.60 L1253.93 704.98 L1251.87 705.39 L1249.83 705.84 L1247.84 706.31 L1245.87 706.82 L1243.94 707.36 L1242.05 707.93 L1240.20 708.53 L1238.39 709.16 L1236.62 709.82 L1234.90 710.50 L1233.26 711.28 L1231.67 712.09 L1230.13 712.92 L1228.64 713.77 L1227.21 714.65 L1225.84 715.55 L1224.52 716.48 L1223.27 717.42 L1222.07 718.39 L1220.94 719.38 L1219.88 720.39 L1218.87 721.42 L1217.94 722.46 L1217.07 723.53 L1216.27 724.61 L1215.54 725.71 L1214.89 726.82 L1214.30 727.95 L1213.79 729.08 L1213.36 730.24 L1213.00 731.40 L1212.72 732.57 L1212.52 733.74 L1212.39 734.92 L1212.35 736.10 L1212.38 737.29 L1212.50 738.47 L1212.69 739.64 L1212.96 740.81 L1213.31 741.97 L1213.74 743.12 L1214.24 744.26 L1214.81 745.38 L1215.46 746.50 L1216.18 747.59 L1216.97 748.67 L1217.83 749.74 L1218.75 750.78 L1219.75 751.81 L1220.80 752.81 L1221.92 753.80 L1223.11 754.77 L1224.35 755.72 L1225.66 756.64 L1227.02 757.54 L1228.44 758.42 L1229.92 759.27 L1231.45 760.10 L1233.04 760.91 L1234.67 761.68 L1236.36 762.44 L1238.09 763.16 L1239.87 763.86 L1241.70 764.53 L1243.56 765.16 L1245.47 765.77 L1247.42 766.35 L1249.40 766.90 L1251.42 767.42 L1253.47 767.90 L1255.55 768.35 L1257.66 768.78 L1259.80 769.16 L1261.96 769.52 L1264.14 769.84 L1266.34 770.12 L1268.56 770.37 L1270.80 770.59 L1273.05 770.77 L1275.31 770.92 L1277.58 771.03 L1279.86 771.11 L1282.14 771.15 L1284.42 771.16 L1286.70 771.13 L1288.97 771.06 L1291.25 770.96 L1293.51 770.83 L1295.77 770.66 L1298.01 770.45 L1300.24 770.21 L1302.45 769.94 L1304.64 769.63 L1306.81 769.29 L1308.95 768.91 L1311.08 768.51 L1313.17 768.06 L1315.23 767.59 L1317.26 767.08 L1319.26 766.55 L1321.22 765.98 L1323.15 765.38 L1325.03 764.75 L1326.87 764.09 L1328.67 763.41 L1330.42 762.69 L1332.12 761.95 L1333.78 761.18 L1335.38 760.39 L1336.93 759.57 L1338.43 758.72 L1339.87 757.85 L1341.26 756.96 L1342.59 756.05 L1343.89 755.16 L1345.14 754.25 L1346.33 753.31 L1347.45 752.35 L1348.52 751.37 L1349.52 750.36 L1350.46 749.33 L1351.33 748.28 L1352.13 747.21 L1352.87 746.11 L1353.53 744.99 L1354.12 743.86 L1354.64 742.70 L1355.08 741.52 L1355.44 740.33 L1355.72 739.12 L1355.91 737.90 L1356.02 736.67 L1356.05 735.43 L1355.99 734.19 L1355.84 732.95 L1355.61 731.72 L1355.30 730.49 L1354.90 729.27 L1354.42 728.07 L1353.86 726.88 L1353.22 725.71 L1352.51 724.55 L1351.72 723.42 L1350.86 722.30 L1349.92 721.21 L1348.92 720.14 L1347.85 719.10 L1346.72 718.08 L1345.52 717.08 L1344.26 716.12 L1342.94 715.17 L1341.55 714.26 L1340.11 713.37 L1338.62 712.51 L1337.07 711.68 L1335.47 710.88 L1333.81 710.11 L1332.11 709.37 L1330.36 708.65 L1328.56 707.97 L1326.72 707.33 L1324.84 706.71 L1322.92 706.12 L1320.99 705.58 L1319.08 705.02 L1317.10 704.49 L1315.08 703.98 L1313.02 703.51 L1310.93 703.07 L1308.80 702.67 L1306.65 702.30 L1304.46 701.96 L1302.25 701.66 L1300.02 701.40 L1297.76 701.16 L1295.48 700.97 L1293.19 700.81 L1290.88 700.68 L1288.56 700.60 L1286.23 700.55 L1283.89 700.54 L1281.54 700.56 L1279.20 700.62 L1276.85 700.72 L1274.50 700.85 L1272.16 701.02 L1269.82 701.22 L1267.49 701.47 L1265.17 701.74 L1262.87 702.06 L1260.58 702.41 L1258.32 702.80 L1256.07 703.22 L1253.85 703.67 L1253.96 704.27 L1256.19 703.93 L1258.44 703.64 L1260.71 703.38 L1263.00 703.15 L1265.30 702.96 L1267.60 702.81 L1269.92 702.69 L1272.24 702.61 L1274.56 702.57 L1276.89 702.56 L1279.21 702.59 L1281.53 702.66 L1283.84 702.76 L1286.14 702.90 L1288.42 703.07 L1290.70 703.28 L1292.95 703.52 L1295.19 703.79 L1297.41 704.10 L1299.60 704.44 L1301.77 704.81 L1303.91 705.21 L1306.01 705.65 L1308.09 706.12 L1310.13 706.61 L1312.13 707.14 L1314.09 707.69 L1316.02 708.27 L1317.90 708.88 L1319.76 709.52 L1321.65 710.14 L1323.46 710.78 L1325.23 711.44 L1326.95 712.13 L1328.63 712.84 L1330.25 713.57 L1331.83 714.32 L1333.35 715.09 L1334.82 715.88 L1336.23 716.69 L1337.58 717.52 L1338.88 718.36 L1340.11 719.21 L1341.28 720.08 L1342.40 720.96 L1343.45 721.84 L1344.43 722.74 L1345.35 723.64 L1346.21 724.55 L1347.00 725.47 L1347.73 726.39 L1348.39 727.31 L1348.99 728.23 L1349.52 729.15 L1349.99 730.07 L1350.40 730.99 L1350.75 731.92 L1351.03 732.84 L1351.26 733.76 L1351.42 734.69 L1351.52 735.62 L1351.57 736.55 L1351.55 737.49 L1351.47 738.44 L1351.33 739.39 L1351.13 740.35 L1350.85 741.31 L1350.52 742.29 L1350.11 743.26 L1349.64 744.25 L1349.10 745.23 L1348.48 746.22 L1347.80 747.20 L1347.05 748.19 L1346.22 749.16 L1345.33 750.14 L1344.37 751.10 L1343.34 752.06 L1342.24 753.00 L1341.08 753.93 L1339.82 754.79 L1338.50 755.64 L1337.12 756.47 L1335.68 757.27 L1334.19 758.06 L1332.65 758.82 L1331.05 759.55 L1329.40 760.27 L1327.70 760.96 L1325.96 761.62 L1324.17 762.25 L1322.34 762.86 L1320.46 763.44 L1318.55 763.99 L1316.60 764.51 L1314.62 765.00 L1312.60 765.46 L1310.55 765.89 L1308.47 766.28 L1306.37 766.65 L1304.24 766.98 L1302.10 767.28 L1299.93 767.54 L1297.74 767.77 L1295.54 767.97 L1293.33 768.13 L1291.11 768.26 L1288.88 768.36 L1286.64 768.42 L1284.41 768.44 L1282.17 768.43 L1279.93 768.39 L1277.70 768.31 L1275.47 768.19 L1273.25 768.05 L1271.05 767.86 L1268.85 767.65 L1266.68 767.40 L1264.52 767.11 L1262.38 766.80 L1260.27 766.45 L1258.18 766.06 L1256.11 765.65 L1254.08 765.20 L1252.08 764.72 L1250.11 764.22 L1248.18 763.68 L1246.29 763.11 L1244.44 762.52 L1242.63 761.89 L1240.86 761.24 L1239.14 760.57 L1237.47 759.86 L1235.85 759.14 L1234.28 758.38 L1232.76 757.61 L1231.30 756.81 L1229.90 756.00 L1228.55 755.16 L1227.26 754.30 L1226.03 753.43 L1224.87 752.54 L1223.77 751.64 L1222.73 750.72 L1221.76 749.79 L1220.85 748.84 L1220.01 747.89 L1219.24 746.93 L1218.54 745.96 L1217.90 744.99 L1217.34 744.01 L1216.84 743.03 L1216.41 742.04 L1216.05 741.06 L1215.76 740.07 L1215.53 739.08 L1215.37 738.09 L1215.28 737.11 L1215.25 736.12 L1215.29 735.13 L1215.40 734.15 L1215.57 733.16 L1215.81 732.17 L1216.12 731.19 L1216.50 730.21 L1216.94 729.22 L1217.45 728.25 L1218.03 727.27 L1218.68 726.30 L1219.40 725.34 L1220.18 724.38 L1221.03 723.44 L1221.95 722.50 L1222.93 721.57 L1223.98 720.66 L1225.09 719.76 L1226.27 718.88 L1227.51 718.02 L1228.80 717.17 L1230.16 716.34 L1231.58 715.53 L1233.05 714.74 L1234.57 713.98 L1236.15 713.23 L1237.75 712.45 L1239.41 711.69 L1241.11 710.95 L1242.86 710.24 L1244.66 709.56 L1246.51 708.90 L1248.39 708.27 L1250.32 707.67 L1252.28 707.11 L1254.28 706.57 L1256.32 706.06 L1258.38 705.58 L1260.48 705.13 L1262.60 704.72 L1264.74 704.34 L1266.92 703.99Z" fill="#e54b4b"/></svg>
<div class="b" style="left:116px;top:984.5px;width:237px;height:44.5px;background:#f4f4f4;overflow:hidden"><div style="position:absolute;left:0px;top:12px;width:237px;height:24px;background:#d6d6d7;filter:blur(6px)"></div><div style="position:absolute;left:4px;top:12px;width:74px;height:22px;background:#bdbdbf;filter:blur(8px)"></div><div style="position:absolute;left:84px;top:15px;width:40px;height:20px;background:#c8c8ca;filter:blur(8px)"></div><div style="position:absolute;left:132px;top:14px;width:80px;height:24px;background:#b5b5b8;filter:blur(8px)"></div><div style="position:absolute;left:214px;top:12px;width:30px;height:24px;background:#cdcdcf;filter:blur(6px)"></div></div>
<div class="b" style="left:0;top:1862px;width:3356px;height:23px;background:linear-gradient(rgba(0,0,0,0),rgba(0,0,0,0.07))"></div>
<div class="b" style="left:0;top:0;width:3356px;height:1885px;box-sizing:border-box;border:1px solid rgba(119,162,229,0.6)"></div>
</body></html>
